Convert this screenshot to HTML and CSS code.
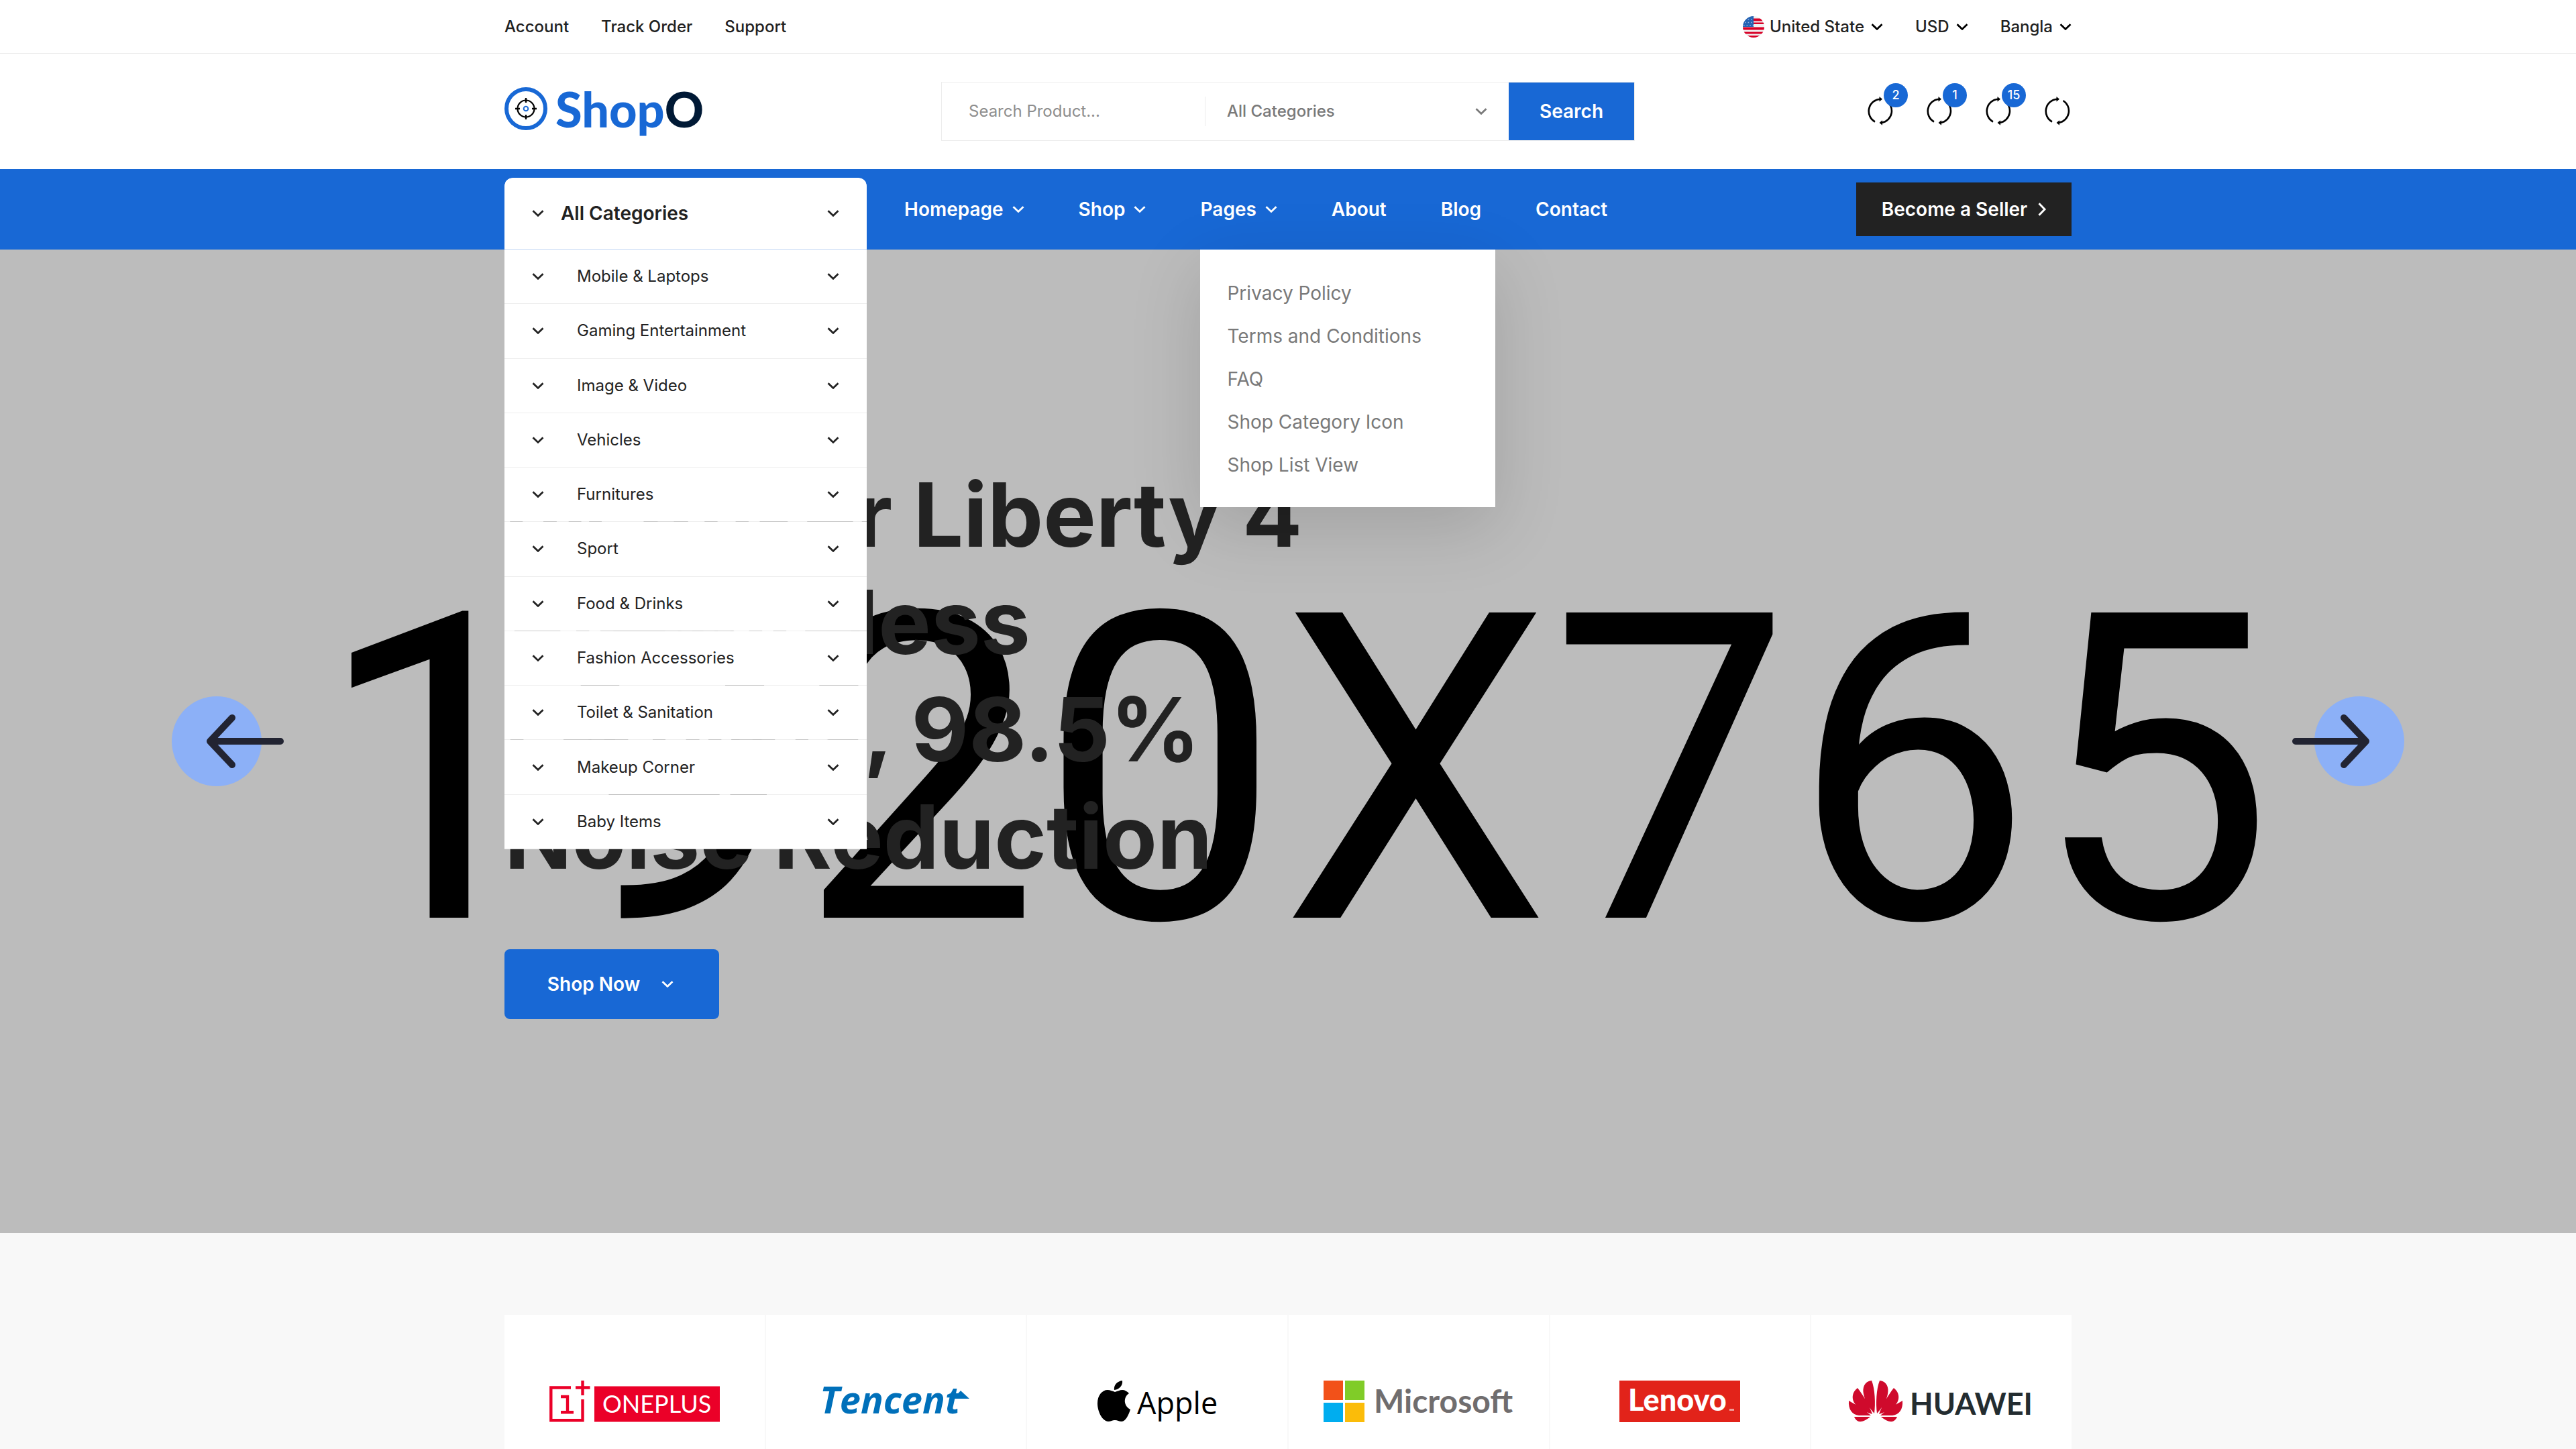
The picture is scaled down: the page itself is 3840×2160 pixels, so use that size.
FILE: index.html
```html
<!DOCTYPE html>
<html lang="en">
<head>
<meta charset="utf-8">
<title>ShopO</title>
<meta name="viewport" content="width=device-width, initial-scale=1">
<link rel="stylesheet" href="styles.css">
</head>
<body>
<svg class="sprite" aria-hidden="true">
  <symbol id="chevron" viewBox="0 0 18 10"><path d="M1.5 1.2 9 8.4l7.5-7.2" fill="none" stroke="currentColor" stroke-width="2.8"/></symbol>
  <symbol id="refresh" viewBox="0 0 40 44">
    <path d="M11 37.500A18 18 0 0 1 18.500 3.800M27.500 6A18 18 0 0 1 21 39" fill="none" stroke="#000" stroke-width="2.600"/>
    <path d="M17.500 0v7.600l4.500-3.800zM22 35.200v7.600l-4.500-3.800z"/>
  </symbol>
</svg>

<header>
  <div class="topbar">
    <div class="container topbar-row">
      <nav class="top-links" aria-label="Account">
        <a href="#">Account</a><a href="#">Track Order</a><a href="#">Support</a>
      </nav>
      <div class="regions">
        <label class="region">
          <svg class="flag" viewBox="0 0 32 32" aria-hidden="true">
            <clipPath id="round"><circle cx="16" cy="16" r="16"/></clipPath>
            <g clip-path="url(#round)">
              <path fill="#f0f0f0" d="M0 0h32v32H0z"/>
              <path fill="#d80027" d="M16 3.500h16v4H16zM16 12h16v-2.500H16zM0 16.500h32v4H0zM0 23.500h32v3H0zM0 29h32v3H0z"/>
              <path fill="#2563b4" d="M0 0h16v16H0z"/>
              <path fill="none" stroke="#8fb0dc" stroke-width="1.600" stroke-dasharray="1.600 3" d="M3 5h13M3 9.500h13M1 14h15"/>
            </g>
          </svg>
          <select aria-label="Country"><option>United State</option></select>
          <svg class="chevron"><use href="#chevron"/></svg>
        </label>
        <label class="region"><select aria-label="Currency"><option>USD</option></select><svg class="chevron"><use href="#chevron"/></svg></label>
        <label class="region"><select aria-label="Language"><option>Bangla</option></select><svg class="chevron"><use href="#chevron"/></svg></label>
      </div>
    </div>
  </div>

  <div class="container masthead">
    <a class="logo" href="#">
      <svg class="logo-mark" viewBox="0 0 64 64" aria-hidden="true">
        <circle cx="32" cy="32" r="29" fill="none" stroke="#1868d5" stroke-width="6"/>
        <circle cx="32" cy="32" r="12.500" fill="none" stroke="#000" stroke-width="2.200"/>
        <path d="M32 16v7M32 41v7M16 32h7M41 32h7" stroke="#000" stroke-width="2.400"/>
        <circle cx="32" cy="32" r="3.300" fill="none" stroke="#1868d5" stroke-width="2"/>
      </svg>
      <span class="logo-name">Shop<span class="logo-end">O</span></span>
    </a>
    <form class="search">
      <input class="search-input" type="search" placeholder="Search Product..." aria-label="Search product">
      <label class="search-category">
        <select aria-label="Category"><option>All Categories</option></select>
        <svg class="chevron"><use href="#chevron"/></svg>
      </label>
      <button class="search-button" type="button">Search</button>
    </form>
    <div class="tools">
      <a class="tool" href="#" aria-label="Compare"><svg><use href="#refresh"/></svg><span class="badge">2</span></a>
      <a class="tool" href="#" aria-label="Wishlist"><svg><use href="#refresh"/></svg><span class="badge">1</span></a>
      <a class="tool" href="#" aria-label="Cart"><svg><use href="#refresh"/></svg><span class="badge">15</span></a>
      <a class="tool" href="#" aria-label="Profile"><svg><use href="#refresh"/></svg></a>
    </div>
  </div>

  <div class="navbar">
    <div class="container navbar-row">
      <div class="categories">
        <button class="categories-head" type="button">
          <svg class="chevron"><use href="#chevron"/></svg><span class="grow">All Categories</span><svg class="chevron"><use href="#chevron"/></svg>
        </button>
        <ul class="categories-list">
          <li><a href="#"><svg class="chevron"><use href="#chevron"/></svg><span class="grow">Mobile &amp; Laptops</span><svg class="chevron"><use href="#chevron"/></svg></a></li>
          <li><a href="#"><svg class="chevron"><use href="#chevron"/></svg><span class="grow">Gaming Entertainment</span><svg class="chevron"><use href="#chevron"/></svg></a></li>
          <li><a href="#"><svg class="chevron"><use href="#chevron"/></svg><span class="grow">Image &amp; Video</span><svg class="chevron"><use href="#chevron"/></svg></a></li>
          <li><a href="#"><svg class="chevron"><use href="#chevron"/></svg><span class="grow">Vehicles</span><svg class="chevron"><use href="#chevron"/></svg></a></li>
          <li><a href="#"><svg class="chevron"><use href="#chevron"/></svg><span class="grow">Furnitures</span><svg class="chevron"><use href="#chevron"/></svg></a></li>
          <li><a href="#"><svg class="chevron"><use href="#chevron"/></svg><span class="grow">Sport</span><svg class="chevron"><use href="#chevron"/></svg></a></li>
          <li><a href="#"><svg class="chevron"><use href="#chevron"/></svg><span class="grow">Food &amp; Drinks</span><svg class="chevron"><use href="#chevron"/></svg></a></li>
          <li><a href="#"><svg class="chevron"><use href="#chevron"/></svg><span class="grow">Fashion Accessories</span><svg class="chevron"><use href="#chevron"/></svg></a></li>
          <li><a href="#"><svg class="chevron"><use href="#chevron"/></svg><span class="grow">Toilet &amp; Sanitation</span><svg class="chevron"><use href="#chevron"/></svg></a></li>
          <li><a href="#"><svg class="chevron"><use href="#chevron"/></svg><span class="grow">Makeup Corner</span><svg class="chevron"><use href="#chevron"/></svg></a></li>
          <li><a href="#"><svg class="chevron"><use href="#chevron"/></svg><span class="grow">Baby Items</span><svg class="chevron"><use href="#chevron"/></svg></a></li>
        </ul>
      </div>
      <nav class="menu" aria-label="Main">
        <div class="menu-item"><a href="#">Homepage<svg class="chevron"><use href="#chevron"/></svg></a></div>
        <div class="menu-item"><a href="#">Shop<svg class="chevron"><use href="#chevron"/></svg></a></div>
        <div class="menu-item"><a href="#">Pages<svg class="chevron"><use href="#chevron"/></svg></a>
          <ul class="submenu">
            <li><a href="#">Privacy Policy</a></li>
            <li><a href="#">Terms and Conditions</a></li>
            <li><a href="#">FAQ</a></li>
            <li><a href="#">Shop Category Icon</a></li>
            <li><a href="#">Shop List View</a></li>
          </ul>
        </div>
        <div class="menu-item"><a href="#">About</a></div>
        <div class="menu-item"><a href="#">Blog</a></div>
        <div class="menu-item"><a href="#">Contact</a></div>
      </nav>
      <a class="seller" href="#">Become a Seller
        <svg class="seller-arrow" viewBox="0 0 12 20" aria-hidden="true"><path d="M1.500 1.200 10 10l-8.500 8.800" fill="none" stroke="currentColor" stroke-width="3"/></svg>
      </a>
    </div>
  </div>
</header>

<main>
  <section class="hero">
    <div class="hero-art" aria-hidden="true">1920X765</div>
    <div class="container hero-copy">
      <h1>by Anker Liberty 4<br>Air Wireless<br>Earbuds, 98.5%<br>Noise Reduction</h1>
      <a class="shop-now" href="#">Shop Now<svg class="chevron"><use href="#chevron"/></svg></a>
    </div>
    <div class="arrows">
      <button type="button" aria-label="Previous">
        <svg viewBox="0 0 168 134"><circle cx="67" cy="67" r="67" fill="#8cb0f7"/><path d="M162 67H57M90 32 57 67l33 35" fill="none" stroke="#222432" stroke-width="10" stroke-linecap="round" stroke-linejoin="round"/></svg>
      </button>
      <button type="button" aria-label="Next">
        <svg viewBox="0 0 168 134"><circle cx="101" cy="67" r="67" fill="#8cb0f7"/><path d="M6 67h105M78 32l33 35-33 35" fill="none" stroke="#222432" stroke-width="10" stroke-linecap="round" stroke-linejoin="round"/></svg>
      </button>
    </div>
  </section>

  <section class="brands" aria-label="Brands">
    <div class="container brand-grid">
      <a class="brand" href="#" aria-label="OnePlus">
        <svg width="254" height="62" viewBox="0 0 254 62">
          <path d="M32 10.500H2.300v48.700h47.200V28" fill="none" stroke="#eb0028" stroke-width="4.400"/>
          <path d="M49.500 0v22M39 10.500h21.500M17 24h10v22M17 47.300h19" fill="none" stroke="#eb0028" stroke-width="4.400"/>
          <path d="M67 8.500h187v53H67z" fill="#eb0028"/>
          <text x="79" y="48" class="oneplus">ONEPLUS</text>
        </svg>
      </a>
      <a class="brand" href="#" aria-label="Tencent">
        <svg width="222" height="62" viewBox="0 0 222 62">
          <text x="-2" y="49" class="tencent">Tencent</text>
          <path d="M197 27 208 15l13 12z" fill="#0070ba"/>
        </svg>
      </a>
      <a class="brand" href="#" aria-label="Apple">
        <svg width="178" height="62" viewBox="0 0 178 62">
          <path d="M25 14C24 7 29 1 37 0c1 7-4 13-12 14zM26 17c4-1 7-3 11-3 4 0 7 2 10 5-9 6-8 19 2 24-2 7-7 18-13 18-4 0-6-2-10-2s-6 2-10 2C8 61 0 47 0 34 0 22 7 14 15 14c4 0 8 2 11 3z"/>
          <text x="59" y="50" class="apple">Apple</text>
        </svg>
      </a>
      <a class="brand" href="#" aria-label="Microsoft">
        <svg width="283" height="62" viewBox="0 0 283 62">
          <path fill="#f25119" d="M0 0h29v29H0z"/><path fill="#80cc28" d="M32 0h29v29H32z"/>
          <path fill="#00adef" d="M0 33h29v29H0z"/><path fill="#fbbc09" d="M32 33h29v29H32z"/>
          <text x="75" y="48" class="microsoft">Microsoft</text>
        </svg>
      </a>
      <a class="brand" href="#" aria-label="Lenovo">
        <svg width="180" height="62" viewBox="0 0 180 62">
          <path fill="#e2231a" d="M0 0h180v62H0z"/>
          <text x="13" y="45" class="lenovo">Lenovo</text>
          <path fill="#f0a09c" d="M164 42h7v3h-7z"/>
        </svg>
      </a>
      <a class="brand" href="#" aria-label="Huawei">
        <svg width="276" height="62" viewBox="0 0 276 62">
          <g fill="#cf0a2c">
            <path id="petals" d="M38 49C40 35 39 12 34 0 23 1 20 11 22 20c2 11 9 21 16 29zM35 50C31 38 21 21 13 11 5 17 4 26 8 33c5 8 17 14 27 17zM33 52C25 45 11 36 0 30c-1 13 5 21 15 22zM32 54H8c4 9 11 10 24 0z"/>
            <use href="#petals" transform="matrix(-1 0 0 1 80 0)"/>
          </g>
          <text x="91" y="51" class="huawei">HUAWEI</text>
        </svg>
      </a>
    </div>
  </section>
</main>
</body>
</html>
```
FILE: styles.css
```css
* { box-sizing: border-box; }

body {
  margin: 0;
  min-height: 100vh;
  display: flex;
  flex-direction: column;
  background: #fff;
  color: #222;
  font-family: Inter, "Liberation Sans", sans-serif;
  font-size: 24px;
  line-height: 32px;
}

a { color: inherit; text-decoration: none; }
ul { margin: 0; padding: 0; list-style: none; }
button, input, select { font: inherit; color: inherit; border: 0; padding: 0; background: none; }
select { appearance: none; field-sizing: content; outline: 0; }
svg { display: block; flex: none; }

.sprite { position: absolute; width: 0; height: 0; }
.container { width: 100%; max-width: 2336px; margin: 0 auto; }
.chevron { width: 18px; height: 10px; }
.grow { flex: 1; text-align: left; }

/* Top bar */
.topbar { border-bottom: 1px solid #e9e9e9; }
.topbar-row { display: flex; justify-content: space-between; align-items: center; height: 79px; font-weight: 500; }
.top-links, .regions { display: flex; gap: 48px; }
.region { display: flex; align-items: center; gap: 10px; }
.region .chevron { color: #000; }
.flag { width: 32px; height: 32px; margin-right: -2px; }

/* Logo, search, tools */
.masthead { display: flex; align-items: center; height: 172px; }
.logo { display: flex; align-items: center; gap: 12px; width: 300px; padding-bottom: 8px; }
.logo-mark { width: 64px; height: 64px; }
.logo-name { font-family: Lato, sans-serif; font-size: 72px; font-weight: 900; line-height: 72px; color: #1868d5; }
.logo-end { color: #001935; }

.search { display: flex; align-items: center; width: 1034px; height: 88px; margin-left: 351px; border: 1px solid #ededed; }
.search-input { width: 392px; padding: 0 40px; outline: 0; }
.search-input::placeholder { color: #8e8e8e; opacity: 1; }
.search-category { flex: 1; display: flex; align-items: center; justify-content: space-between; height: 44px; padding: 0 32px; border-left: 1px solid #ededed; color: #797979; font-weight: 500; }
.search-button { width: 187px; height: 86px; background: #1868d5; color: #fff; font-size: 28px; font-weight: 600; }

.tools { display: flex; gap: 48px; margin-left: auto; }
.tool { position: relative; }
.tool svg { width: 40px; height: 44px; }
.badge { position: absolute; left: 24px; top: -20px; width: 36px; height: 36px; border-radius: 50%; background: #1868d5; color: #fff; font-size: 18px; font-weight: 500; line-height: 36px; text-align: center; }

/* Navigation */
.navbar { position: relative; z-index: 2; background: #1868d5; }
.navbar-row { display: flex; align-items: center; height: 120px; }
.categories { position: relative; align-self: flex-end; width: 540px; z-index: 1; }
.categories-head { display: flex; align-items: center; gap: 25px; width: 100%; height: 107px; padding: 0 41px; border-bottom: 1px solid rgba(255, 255, 255, .75); border-radius: 12px 12px 0 0; background: #fff padding-box; font-size: 28px; font-weight: 600; }
.categories-list { position: absolute; top: 100%; left: 0; right: 0; display: flex; flex-direction: column; height: 894px; }
.categories-list li { flex: 1; display: flex; border-bottom: 1px solid rgba(255, 255, 255, .75); background: #fff padding-box; }
.categories-list a { flex: 1; display: flex; align-items: center; padding: 0 41px; gap: 49px; }

.menu { display: flex; gap: 81px; margin-left: 56px; align-self: stretch; color: #fff; font-size: 28px; font-weight: 600; }
.menu-item { position: relative; display: flex; align-items: center; }
.menu-item > a { display: flex; align-items: center; gap: 13px; }
.submenu { position: absolute; top: 100%; left: 0; width: 440px; padding: 33px 40px 31px; background: #fff; color: #797979; font-weight: 400; line-height: 64px; box-shadow: 0 30px 100px rgba(0, 0, 0, .14); }
.submenu a { display: block; }

.seller { display: flex; align-items: center; justify-content: center; gap: 16px; width: 321px; height: 80px; margin-left: auto; background: #222; color: #fff; font-size: 28px; font-weight: 600; }
.seller-arrow { width: 12px; height: 20px; }

/* Hero */
.hero { position: relative; display: flex; align-items: center; min-height: 1466px; background: #bcbcbc; overflow: hidden; }
.hero-art { position: absolute; inset: 0; padding: 88px 0 0 20px; display: flex; align-items: center; justify-content: center; color: #000; font-family: Roboto, sans-serif; font-size: 640px; line-height: 750px; }
.hero-copy { position: relative; display: flex; flex-direction: column; align-items: flex-start; gap: 88px; padding-bottom: 4px; }
.hero-copy h1 { margin: 0; font-size: 132px; font-weight: 700; line-height: 160px; }
.shop-now { display: flex; align-items: center; justify-content: center; gap: 32px; width: 320px; height: 104px; padding-right: 4px; border-radius: 8px; background: #1868d5; color: #fff; font-size: 28px; font-weight: 600; }
.arrows { position: absolute; inset: 0 256px; display: flex; align-items: center; justify-content: space-between; pointer-events: none; }
.arrows button { pointer-events: auto; }
.arrows svg { width: 168px; height: 134px; }

/* Brands */
.brands { flex: 1; padding-top: 122px; background: #f8f8f8; }
main { flex: 1; display: flex; flex-direction: column; }
.brand-grid { display: grid; grid-template-columns: repeat(6, 1fr); gap: 2px; }
.brand { display: flex; justify-content: center; padding: 98px 0 40px; background: #fff; }
.brand svg { overflow: visible; }
.oneplus { font: 400 36px Lato, sans-serif; fill: #fff; }
.tencent { font: italic 700 56px "Open Sans", sans-serif; fill: #0070ba; }
.apple { font: 400 45px "Open Sans", sans-serif; fill: #000; }
.microsoft { font: 700 48px Lato, sans-serif; fill: #706d6e; }
.lenovo { font: 900 45px Lato, sans-serif; fill: #fff; }
.huawei { font: 700 45px Lato, sans-serif; fill: #232c30; }
```
